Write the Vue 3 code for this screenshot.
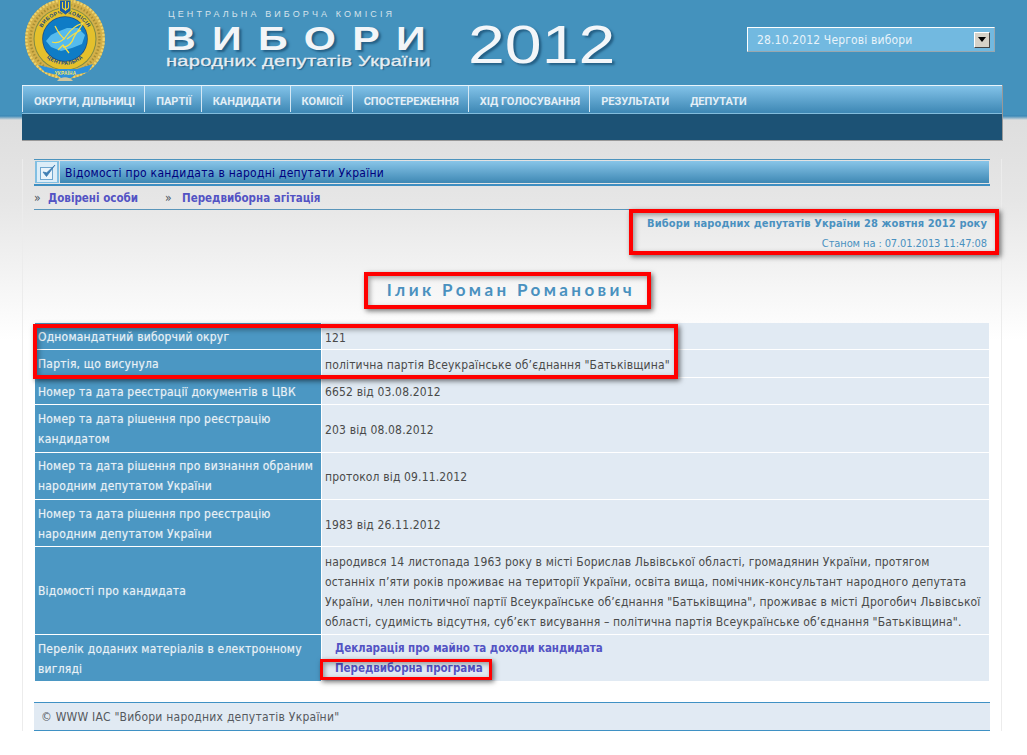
<script setup>
const nav = ['ОКРУГИ, ДІЛЬНИЦІ', 'ПАРТІЇ', 'КАНДИДАТИ', 'КОМІСІЇ', 'СПОСТЕРЕЖЕННЯ', 'ХІД ГОЛОСУВАННЯ', 'РЕЗУЛЬТАТИ', 'ДЕПУТАТИ']
const rows = [
  ['Одномандатний виборчий округ', '121'],
  ['Партія, що висунула', 'політична партія Всеукраїнське об’єднання "Батьківщина"'],
  ['Номер та дата реєстрації документів в ЦВК', '6652 від 03.08.2012'],
  ['Номер та дата рішення про реєстрацію кандидатом', '203 від 08.08.2012'],
  ['Номер та дата рішення про визнання обраним народним депутатом України', 'протокол від 09.11.2012'],
  ['Номер та дата рішення про реєстрацію народним депутатом України', '1983 від 26.11.2012'],
  ['Відомості про кандидата', 'народився 14 листопада 1963 року в місті Борислав Львівської області, громадянин України, протягом\nостанніх п’яти років проживає на території України, освіта вища, помічник-консультант народного депутата\nУкраїни, член політичної партії Всеукраїнське об’єднання "Батьківщина", проживає в місті Дрогобич Львівської\nобласті, судимість відсутня, суб’єкт висування – політична партія Всеукраїнське об’єднання "Батьківщина".'],
]
</script>

<template>
  <div class="page">
    <header class="banner">
      <svg class="logo" width="80" height="84" viewBox="0 0 80 84" aria-label="Герб">
        <defs>
          <path id="ringTop" d="M 14 41 A 26 26 0 0 1 66 41" />
          <path id="ringBottom" d="M 17 52 A 26 26 0 0 0 63 52" />
        </defs>
        <circle cx="40" cy="40" r="40" fill="#d3b04a" />
        <circle cx="40" cy="40" r="38.7" fill="none" stroke="#ecd36e" stroke-width="2.4" stroke-dasharray="2 1.6" />
        <circle cx="40" cy="40" r="34.5" fill="none" stroke="#a98e33" stroke-width="2.4" stroke-dasharray="1.5 2" />
        <circle cx="40" cy="40" r="31.5" fill="#7d8a45" />
        <circle cx="40" cy="40" r="30.5" fill="#e4c02c" />
        <circle cx="40" cy="40" r="22.8" fill="#1d4f86" />
        <circle cx="40" cy="40" r="22" fill="#0f7cc6" />
        <path d="M21 42 L26 36 L32 33 L42 29 L53 29 L60 36 L57 45 L47 49 L36 52 L26 48 Z" fill="#55bbee" />
        <path d="M27 43 C 33 45 38 42 42 36 C 46 30 52 26 58 24 C 55 30 51 34 49 38 C 47 44 43 48 38 48 M30 27 C 33 33 36 38 40 40 M33 51 L38 46 L44 54 M42 40 C 47 36 52 33 56 31" fill="none" stroke="#f5dd48" stroke-width="1.3" />
        <text class="ring"><textPath href="#ringTop" startOffset="50%" text-anchor="middle">ВИБОРЧА  КОМІСІЯ</textPath></text>
        <text class="ring"><textPath href="#ringBottom" startOffset="50%" text-anchor="middle">ЦЕНТРАЛЬНА</textPath></text>
        <path d="M34.5 1 H46 V12 L40.5 16 L34.5 12 Z" fill="#1b5fa8" stroke="#e6c52a" stroke-width="1" />
        <path d="M40.5 2 V12 M37.5 3 V9 L40.5 11 L43.5 9 V3" fill="none" stroke="#f3d531" stroke-width="1.1" />
        <path d="M13 66 L30 70 H52 L68 65 L63 73 L50 76 L46 79 H36 L32 76 L20 73 Z" fill="#2d92dc" />
        <text class="ribbon" x="40.5" y="75.5" text-anchor="middle">УКРАЇНА</text>
        <path d="M32 82 C 36 77 44 77 48 82 Z" fill="#cfc7a0" />
      </svg>
      <div class="wordmark">
        <div class="cvk">ЦЕНТРАЛЬНА ВИБОРЧА КОМІСІЯ</div>
        <div class="vybory">ВИБОРИ</div>
        <div class="deputies">народних депутатів України</div>
      </div>
      <div class="year">2012</div>
      <div class="picker">
        <span>28.10.2012 Чергові вибори</span>
        <span class="picker-btn"><i></i></span>
      </div>
    </header>

    <nav class="nav">
      <div class="nav-top">
        <a v-for="item in nav" :key="item" class="nav-item">{{ item }}</a>
      </div>
      <div class="nav-bottom"></div>
    </nav>

    <main class="content">
      <div class="title-bar">
        <span class="title-icon">
          <svg width="20" height="20" viewBox="0 0 20 20">
            <rect x="3.5" y="5.5" width="12" height="12" fill="#eaf4fb" stroke="#6fa6cf" />
            <path d="M6 10 L9.5 14.5 L18 3 L9.7 10.8 Z" fill="#3f7db3" stroke="#3f7db3" stroke-width=".8" />
          </svg>
        </span>
        <span class="title-text">Відомості про кандидата в народні депутати України</span>
      </div>
      <div class="links">
        <span class="crumb"><i>»</i><a>Довірені особи</a></span>
        <span class="crumb"><i>»</i><a>Передвиборна агітація</a></span>
      </div>
      <div class="info">
        <div class="info-main">Вибори народних депутатів України 28 жовтня 2012 року</div>
        <div class="info-date">Станом на : 07.01.2013 11:47:08</div>
      </div>
      <h1 class="name">Ілик Роман Романович</h1>

      <div class="grid">
        <template v-for="row in rows" :key="row[0]">
          <div class="label">{{ row[0] }}</div>
          <div class="value">{{ row[1] }}</div>
        </template>
        <div class="label">Перелік доданих матеріалів в електронному вигляді</div>
        <div class="value files">
          <a>Декларація про майно та доходи кандидата</a>
          <a>Передвиборна програма</a>
        </div>
      </div>

      <footer class="footer">© WWW IAC "Вибори народних депутатів України"</footer>
    </main>

    <div class="mark mark-info"></div>
    <div class="mark mark-name"></div>
    <div class="mark mark-rows"></div>
    <div class="mark mark-file"></div>
  </div>
</template>

<style>
html, body { margin: 0; background: #fff; }
</style>

<style scoped>
.page {
  position: relative;
  min-height: 755px;
  overflow: hidden;
  font-family: "DejaVu Sans Condensed", "DejaVu Sans", sans-serif;
  font-size: 12px;
  background:
    linear-gradient(#4492bd 0, #4492bd 115px, #3f8bb8 115px, #3f8bb8 116px, #dedede 120px, #e6e6e6 200px, #f8f8f8 300px, #fff 340px);
}
.banner { display: flex; height: 85px; }
.logo { margin: -1px 0 0 25px; flex: none; }
.ring { font: bold 5.2px "Liberation Sans", sans-serif; fill: #16467e; letter-spacing: .4px; }
.ribbon { font: bold 4.6px "Liberation Sans", sans-serif; fill: #ffe95a; letter-spacing: .3px; }
.wordmark { width: 270px; margin-left: 61px; flex: none; color: #f2f5f8; font-family: "Liberation Sans", Arial, sans-serif; }
.cvk { margin: 9px 0 0 2px; font-size: 9px; line-height: 10px; letter-spacing: 3.1px; color: #d5e3ec; white-space: nowrap; }
.vybory {
  height: 28px; margin-top: 6px; font-size: 33px; line-height: 28px; font-weight: 700; letter-spacing: 13px; white-space: nowrap;
  transform: scaleX(1.25); transform-origin: left; text-shadow: 2px 2px 2px #245f85;
}
.deputies {
  height: 15px; margin-top: 1px; font-size: 14px; line-height: 15px; letter-spacing: .2px; white-space: nowrap;
  -webkit-text-stroke: .3px #e6edf2;
  transform: scaleX(1.43); transform-origin: left; color: #e6edf2; text-shadow: 1px 1px 1px #245f85;
}
.year {
  flex: none; width: 120px; margin: 17px 0 0 32px; color: #f3f6f9; font: 53px/56px "Liberation Sans", Arial, sans-serif;
  transform: scaleX(1.25); transform-origin: left; text-shadow: 2px 2px 2px #245f85;
}
.picker {
  box-sizing: border-box; width: 248px; height: 25px; margin: 27px 0 0 159px; flex: none;
  display: flex; align-items: center; justify-content: space-between; padding: 0 4px 0 9px; letter-spacing: .15px;
  background: #72b9e0; color: #e8f3fa; border: 1px solid #9aa7ae; border-top-color: #fff; border-left-color: #fff;
}
.picker-btn {
  box-sizing: border-box; width: 16px; height: 16px; background: #d6d2c8; display: flex; align-items: center; justify-content: center;
  border: 1px solid; border-color: #fff #444 #444 #fff;
}
.picker-btn i { width: 0; height: 0; border: 4px solid transparent; border-top: 5px solid #000; border-bottom: 0; }

.nav { box-sizing: border-box; width: 981px; margin-left: 22px; height: 56px; border-right: 1px solid #999; border-bottom: 1px solid #999; }
.nav-top {
  display: flex; height: 29px; box-sizing: border-box; border-top: 1px solid #e8f4fb; border-bottom: 1px solid #82bcdc;
  background: linear-gradient(#82c2e8, #3d87b4);
}
.nav-item {
  position: relative; padding: 6px 9px 0 11px; height: 20px; color: #e4eff6; font: 700 11px/20px Roboto, sans-serif; white-space: nowrap;
  border-left: 1px solid #d5e8f4;
}
.nav-item:last-child { border-left: 0; margin-left: 1px; }
.nav-bottom { height: 26px; background: #1c5275; }

.content {
  box-sizing: border-box; width: 980px; margin: 18px 0 0 22px; padding: 0 11px; height: 572px;
  border-left: 1px solid #ececec; border-right: 1px solid #ececec;
}
.title-bar {
  box-sizing: border-box; height: 27px; display: flex; padding: 1px 1px 1px 1px;
  border-top: 1px solid #4c93bd; border-bottom: 2px solid #3f8fc2;
}
.title-icon { width: 24px; background: #82bfe2; display: flex; align-items: center; justify-content: center; flex: none; }
.title-icon svg { background: #dcedf8; }
.title-text {
  flex: 1; margin-left: 1px; padding-left: 5px; line-height: 24px; color: #00007e; letter-spacing: .27px;
  background: linear-gradient(#88c5e8, #3e88b4);
}
.links { box-sizing: border-box; height: 24px; border-bottom: 1px solid #5a95ba; line-height: 25px; display: flex; }
.crumb { display: flex; color: #4a5560; margin-right: 27px; white-space: nowrap; }
.crumb i { font-style: normal; width: 17px; }
.crumb a, .files a { color: #5353c4; font-weight: 700; font-size: 11.5px; }
.crumb:first-child { width: 104px; }
.info { height: 62px; box-sizing: border-box; padding: 4px 3px 0 0; text-align: right; color: #4a91c0; line-height: 20px; }
.info-main { font-weight: 700; font-size: 11px; letter-spacing: .13px; }
.info-date { font-size: 11px; letter-spacing: -.1px; }
.name {
  margin: 0; height: 51px; text-align: center; font: 700 17px/36px Lato, sans-serif; color: #4a91bf; letter-spacing: 3.4px;
  padding-right: 2px; box-sizing: border-box;
}
.grid { margin: 0 1px; display: grid; grid-template-columns: 286px 1fr; gap: 1px; line-height: 20px; }
.label, .value { padding: 4.6px 3px 1.8px; display: flex; align-items: center; }
.label { padding: 3.8px 3px 2.6px; background: #4b97c3; color: #eaf1f5; letter-spacing: .2px; text-shadow: 0 0 1px rgba(255,255,255,.4); }
.value { background: #e1eaf3; color: #4a4a4a; letter-spacing: .15px; white-space: pre-line; }
.files { display: block; padding-left: 13px; padding-top: 3px; }
.files a { display: block; letter-spacing: -.05px; }
.footer {
  box-sizing: border-box; margin-top: 21px; height: 29px; padding-left: 7px; line-height: 28px; letter-spacing: .24px;
  background: #e1eaf3; color: #55595e; border-top: 1px solid #3f91c4; border-bottom: 1px solid #3f91c4;
}

.mark { position: absolute; box-sizing: border-box; border: 4px solid #f00; box-shadow: 2px 2px 5px rgba(0,0,0,.55), inset 2px 2px 5px rgba(0,0,0,.35); }
.mark-info { left: 629px; top: 209px; width: 370px; height: 46px; }
.mark-name { left: 364px; top: 272px; width: 287px; height: 37px; }
.mark-rows { left: 33px; top: 324px; width: 645px; height: 55px; }
.mark-file { left: 320px; top: 659px; width: 172px; height: 21px; border-width: 3px; }
</style>
